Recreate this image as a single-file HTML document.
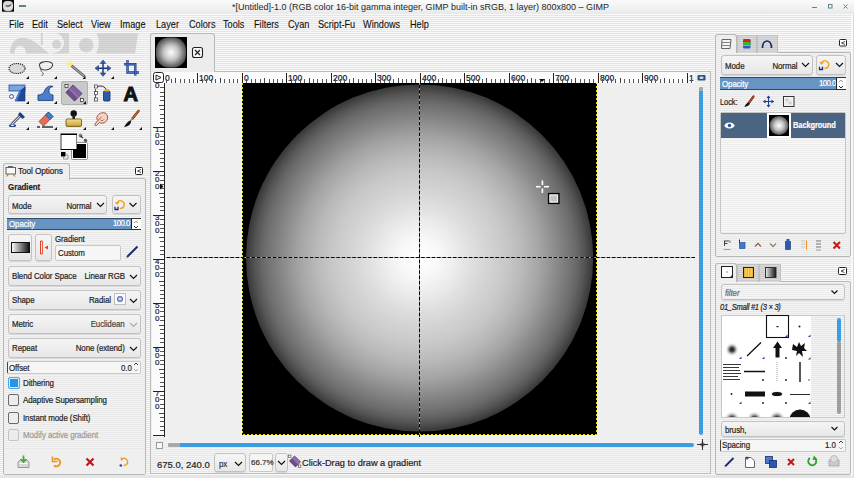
<!DOCTYPE html>
<html><head><meta charset="utf-8">
<style>
*{box-sizing:border-box;margin:0;padding:0}
html,body{width:854px;height:478px;overflow:hidden}
body{position:relative;font-family:"Liberation Sans",sans-serif;font-size:9px;color:#1e1e1e;
background:repeating-linear-gradient(to bottom,#f8f8f8 0 1px,#e5e5e5 1px 2px);}
.a{position:absolute}
.t{position:absolute;white-space:nowrap;line-height:1;font-size:9px;letter-spacing:-0.1px;-webkit-text-stroke:0.2px currentColor;transform:scaleX(.88);transform-origin:0 0}
.ns{transform:none;letter-spacing:0}
.menu span{position:absolute;top:20px;font-size:10.2px;line-height:1;color:#111;-webkit-text-stroke:0.1px #111;transform:scaleX(.9);transform-origin:0 0}
.panel{position:absolute;background:repeating-linear-gradient(to bottom,#f3f3f3 0 1px,#e8e8e8 1px 2px);border:1px solid #b8b8b8;border-radius:2px}
.tab{position:absolute;background:#eeeeee;border:1px solid #b8b8b8;border-bottom:none;border-radius:3px 3px 0 0}
.itab{position:absolute;background:repeating-linear-gradient(to bottom,#dadada 0 1px,#cbcbcb 1px 2px);border:1px solid #c0c0c0;border-bottom:none}
.combo{position:absolute;background:linear-gradient(#f5f5f5,#e7e7e7);border:1px solid #c2c2c2;border-radius:3px;box-shadow:0 1px 0 #d8d8d8}
.combo .l{position:absolute;left:3px;top:6px;font-size:9px;line-height:1;white-space:nowrap;letter-spacing:-0.1px;-webkit-text-stroke:0.2px currentColor;transform:scaleX(.88);transform-origin:0 0}
.combo .r{position:absolute;right:15px;top:6px;font-size:9px;line-height:1;white-space:nowrap;letter-spacing:-0.1px;-webkit-text-stroke:0.2px currentColor;transform:scaleX(.88);transform-origin:100% 0}
.spin{position:absolute;background:#6894c4;border-top:1px solid #2d4b6b;border-bottom:1px solid #2d4b6b}
.sbox{position:absolute;background:#fdfdfd;border-top:1px solid #333;border-bottom:1px solid #333;border-left:1px solid #222}
.entry{position:absolute;background:#f6f6f6;border:1px solid #c8c8c8;border-radius:2px}
.cb{position:absolute;width:11px;height:12px;border:1px solid #6a6a6a;border-radius:2px;background:#ececec}
.ruler{position:absolute;background:#fbfbfb}
svg{position:absolute;left:0;top:0}
</style></head><body>
<!-- title bar -->
<div class="a" style="left:0;top:0;width:854px;height:14px;background:linear-gradient(#fbfbfb,#e8e9ea)"></div>
<div class="t ns" style="left:232px;top:3px;font-size:9px;color:#262626;-webkit-text-stroke:0">*[Untitled]-1.0 (RGB color 16-bit gamma integer, GIMP built-in sRGB, 1 layer) 800x800 – GIMP</div>
<div class="a" style="left:851px;top:14px;width:3px;height:464px;background:#f8f8f8;border-right:1px solid #e0d8d8"></div>
<div class="a" style="left:0;top:476px;width:854px;height:2px;background:#e6e6e6"></div>
<!-- menu -->
<div class="menu">
<span style="left:9px">File</span><span style="left:32px">Edit</span><span style="left:57px">Select</span><span style="left:91px">View</span><span style="left:120px">Image</span><span style="left:156px">Layer</span><span style="left:189px">Colors</span><span style="left:223px">Tools</span><span style="left:254px">Filters</span><span style="left:288px">Cyan</span><span style="left:318px">Script-Fu</span><span style="left:363px">Windows</span><span style="left:410px">Help</span>
</div>

<!-- toolbox selected tool highlight -->
<div class="a" style="left:61px;top:81px;width:27px;height:24px;background:#c9c9c9;border:1px solid #b0b0b0;border-radius:2px"></div>

<!-- left dock: tool options -->
<div class="panel" style="left:3px;top:178px;width:143px;height:297px"></div>
<div class="tab" style="left:3px;top:163px;width:67px;height:17px"></div>
<div class="t" style="left:18px;top:166px;font-size:9.4px">Tool Options</div>
<div class="t" style="left:8px;top:183px;font-size:9.1px;font-weight:bold">Gradient</div>

<div class="combo" style="left:8px;top:195px;width:99px;height:19px"><span class="l">Mode</span><span class="r">Normal</span></div>
<div class="combo" style="left:112px;top:195px;width:29px;height:19px"></div>
<div class="spin" style="left:7px;top:218px;width:125px;height:12px"></div>
<div class="t" style="left:9px;top:220px;color:#fff">Opacity</div>
<div class="t" style="left:113px;top:219px;color:#fff;letter-spacing:-0.68px">100.0</div>
<div class="sbox" style="left:131px;top:218px;width:10px;height:12px"></div>

<div class="combo" style="left:8px;top:234px;width:24px;height:27px"></div>
<div class="combo" style="left:35px;top:234px;width:17px;height:27px"></div>
<div class="t" style="left:55px;top:235px">Gradient</div>
<div class="entry" style="left:55px;top:245px;width:66px;height:16px"></div>
<div class="t" style="left:58px;top:249px">Custom</div>

<div class="combo" style="left:8px;top:266px;width:133px;height:20px"><span class="l" style="top:5px">Blend Color Space</span><span class="r" style="top:5px">Linear RGB</span></div>
<div class="combo" style="left:8px;top:290px;width:133px;height:20px"><span class="l" style="top:5px">Shape</span><span class="r" style="right:29px;top:5px">Radial</span></div>
<div class="a" style="left:114px;top:293px;width:12px;height:12px;background:#fafafa;border:1px solid #c0c0c0"></div>
<div class="a" style="left:117px;top:296px;width:6px;height:6px;border-radius:3px;background:radial-gradient(#fff,#3a5ec0 70%)"></div>
<div class="combo" style="left:8px;top:314px;width:133px;height:20px"><span class="l" style="top:5px">Metric</span><span class="r" style="color:#444;top:5px">Euclidean</span></div>
<div class="combo" style="left:8px;top:338px;width:133px;height:20px"><span class="l" style="top:5px">Repeat</span><span class="r" style="top:5px">None (extend)</span></div>
<div class="entry" style="left:7px;top:361px;width:134px;height:13px;border-left:1px solid #444"></div>
<div class="t" style="left:9px;top:364px">Offset</div>
<div class="t" style="left:121px;top:364px">0.0</div>

<div class="cb" style="left:8px;top:377px;width:12px;background:#2a92e2;border-color:#48a8f0;box-shadow:inset 0 0 0 1px #d8ecfa"></div>
<div class="t" style="left:23px;top:379px">Dithering</div>
<div class="cb" style="left:8px;top:394px"></div>
<div class="t" style="left:23px;top:396px">Adaptive Supersampling</div>
<div class="cb" style="left:8px;top:412px"></div>
<div class="t" style="left:23px;top:414px">Instant mode  (Shift)</div>
<div class="cb" style="left:8px;top:429px;border-color:#c4c4c4"></div>
<div class="t" style="left:23px;top:431px;color:#9a9a9a">Modify active gradient</div>
<div class="a" style="left:4px;top:449px;width:141px;height:25px;background:#efefef"></div>

<!-- image window -->
<div class="a" style="left:150px;top:71px;width:561px;height:403px;border:1px solid #bcbcbc;background:repeating-linear-gradient(to bottom,#f4f4f4 0 1px,#e8e8e8 1px 2px)"></div>
<div class="tab" style="left:150px;top:33px;width:65px;height:39px;background:#ececec"></div>
<div class="a" style="left:155px;top:37px;width:32px;height:31px;background:#000"></div>
<div class="ruler" style="left:164px;top:72px;width:531px;height:11px"></div>
<div class="ruler" style="left:152px;top:83px;width:12px;height:354px"></div>
<div class="a" style="left:164px;top:83px;width:531px;height:359px;background:#efefef"></div>
<div class="a" style="left:242px;top:83px;width:355px;height:352px;background:#000"></div>
<div class="a" style="left:168px;top:443px;width:526px;height:4px;border-radius:2px;background:#3d9be0"></div>
<div class="a" style="left:168px;top:443px;width:12px;height:4px;border-radius:2px 0 0 2px;background:#a8a8a8"></div>
<div class="a" style="left:699px;top:87px;width:4px;height:348px;border-radius:2px;background:#3d9be0"></div>
<div class="a" style="left:699px;top:87px;width:4px;height:4px;border-radius:2px 2px 0 0;background:#a8a8a8"></div>
<div class="a" style="left:156px;top:442px;width:7px;height:7px;border:1px solid #9a9a9a;background:#f8f8f8"></div>
<!-- status bar -->
<div class="t ns" style="left:157px;top:460px;font-size:9.5px">675.0, 240.0</div>
<div class="combo" style="left:214px;top:453px;width:32px;height:19px"><span class="l" style="left:4px;color:#333">px</span></div>
<div class="entry" style="left:249px;top:453px;width:24px;height:19px;background:#f5f5f5"></div>
<div class="t ns" style="left:251px;top:459px;font-size:8px;color:#333">66.7%</div>
<div class="combo" style="left:275px;top:453px;width:13px;height:19px"></div>
<div class="t ns" style="left:302px;top:459px;font-size:9.2px">Click-Drag to draw a gradient</div>

<!-- right dock: layers -->
<div class="panel" style="left:715px;top:52px;width:136px;height:205px"></div>
<div class="tab" style="left:715px;top:34px;width:22px;height:19px"></div>
<div class="itab" style="left:737px;top:35px;width:20px;height:18px"></div>
<div class="itab" style="left:757px;top:35px;width:21px;height:18px"></div>
<div class="combo" style="left:721px;top:55px;width:92px;height:20px"><span class="l">Mode</span><span class="r">Normal</span></div>
<div class="combo" style="left:816px;top:55px;width:30px;height:20px"></div>
<div class="spin" style="left:720px;top:77px;width:117px;height:13px"></div>
<div class="t" style="left:722px;top:80px;color:#fff">Opacity</div>
<div class="t" style="left:819px;top:79px;color:#fff;letter-spacing:-0.68px">100.0</div>
<div class="sbox" style="left:836px;top:77px;width:10px;height:13px"></div>
<div class="t" style="left:720px;top:98px;font-size:8.5px">Lock:</div>
<div class="a" style="left:720px;top:112px;width:126px;height:122px;background:repeating-linear-gradient(to bottom,#f8f8f8 0 1px,#ececec 1px 2px);border:1px solid #c4c4c4;border-radius:2px"></div>
<div class="a" style="left:721px;top:113px;width:124px;height:25px;background:#4a6482"></div>
<div class="a" style="left:767px;top:113px;width:24px;height:25px;background:#fff"></div>
<div class="a" style="left:769px;top:115px;width:20px;height:21px;background:#000"></div>
<div class="t" style="left:793px;top:121px;font-size:8.5px;font-weight:bold;color:#fff">Background</div>

<!-- right dock: brushes -->
<div class="panel" style="left:715px;top:281px;width:136px;height:194px"></div>
<div class="tab" style="left:715px;top:263px;width:22px;height:19px"></div>
<div class="itab" style="left:737px;top:264px;width:22px;height:18px"></div>
<div class="itab" style="left:759px;top:264px;width:22px;height:18px"></div>
<div class="combo" style="left:721px;top:284px;width:124px;height:16px;background:repeating-linear-gradient(to bottom,#f6f6f6 0 1px,#ebebeb 1px 2px)"><span class="l" style="top:4px;font-style:italic;color:#666">filter</span></div>
<div class="t" style="left:720px;top:303px;font-style:italic;font-size:8.6px;letter-spacing:-0.34px">01_Small #1 (3 × 3)</div>
<div class="a" style="left:721px;top:315px;width:124px;height:103px;border:1px solid #c8c8c8;background:repeating-linear-gradient(to bottom,#f4f4f4 0 1px,#e6e6e6 1px 2px)"></div>
<div class="a" style="left:722px;top:316px;width:89px;height:101px;background:#fff"></div>
<div class="a" style="left:837px;top:318px;width:4px;height:24px;border-radius:2px;background:#3d9be0"></div>
<div class="a" style="left:837px;top:342px;width:4px;height:72px;border-radius:0 0 2px 2px;background:#9e9e9e"></div>
<div class="combo" style="left:721px;top:421px;width:124px;height:16px"><span class="l" style="top:4px">brush,</span></div>
<div class="entry" style="left:720px;top:439px;width:126px;height:13px;border-left:1px solid #444"></div>
<div class="t" style="left:722px;top:441px">Spacing</div>
<div class="t" style="left:825px;top:441px">1.0</div>
<div class="a" style="left:164px;top:72px;width:530px;height:11px;overflow:hidden"><div class="t ns" style="left:35px;top:2px;font-size:8.5px;color:#101838">100</div><div class="t ns" style="left:80px;top:2px;font-size:8.5px;color:#101838">0</div><div class="t ns" style="left:124px;top:2px;font-size:8.5px;color:#101838">100</div><div class="t ns" style="left:169px;top:2px;font-size:8.5px;color:#101838">200</div><div class="t ns" style="left:213px;top:2px;font-size:8.5px;color:#101838">300</div><div class="t ns" style="left:258px;top:2px;font-size:8.5px;color:#101838">400</div><div class="t ns" style="left:302px;top:2px;font-size:8.5px;color:#101838">500</div><div class="t ns" style="left:347px;top:2px;font-size:8.5px;color:#101838">600</div><div class="t ns" style="left:391px;top:2px;font-size:8.5px;color:#101838">700</div><div class="t ns" style="left:436px;top:2px;font-size:8.5px;color:#101838">800</div><div class="t ns" style="left:480px;top:2px;font-size:8.5px;color:#101838">900</div><div class="t ns" style="left:525px;top:2px;font-size:8.5px;color:#101838">1000</div><div class="t ns" style="left:1px;top:2px;font-size:8.5px;color:#101838">0</div></div><div class="t ns" style="left:155px;top:82px;font-size:8px;color:#101838">0</div><div class="t ns" style="left:155px;top:126px;font-size:8px;color:#101838">1</div><div class="t ns" style="left:155px;top:132px;font-size:8px;color:#101838">0</div><div class="t ns" style="left:155px;top:139px;font-size:8px;color:#101838">0</div><div class="t ns" style="left:155px;top:170px;font-size:8px;color:#101838">2</div><div class="t ns" style="left:155px;top:176px;font-size:8px;color:#101838">0</div><div class="t ns" style="left:155px;top:183px;font-size:8px;color:#101838">0</div><div class="t ns" style="left:155px;top:214px;font-size:8px;color:#101838">3</div><div class="t ns" style="left:155px;top:220px;font-size:8px;color:#101838">0</div><div class="t ns" style="left:155px;top:227px;font-size:8px;color:#101838">0</div><div class="t ns" style="left:155px;top:258px;font-size:8px;color:#101838">4</div><div class="t ns" style="left:155px;top:264px;font-size:8px;color:#101838">0</div><div class="t ns" style="left:155px;top:271px;font-size:8px;color:#101838">0</div><div class="t ns" style="left:155px;top:302px;font-size:8px;color:#101838">5</div><div class="t ns" style="left:155px;top:308px;font-size:8px;color:#101838">0</div><div class="t ns" style="left:155px;top:315px;font-size:8px;color:#101838">0</div><div class="t ns" style="left:155px;top:346px;font-size:8px;color:#101838">6</div><div class="t ns" style="left:155px;top:352px;font-size:8px;color:#101838">0</div><div class="t ns" style="left:155px;top:359px;font-size:8px;color:#101838">0</div><div class="t ns" style="left:155px;top:390px;font-size:8px;color:#101838">7</div><div class="t ns" style="left:155px;top:396px;font-size:8px;color:#101838">0</div><div class="t ns" style="left:155px;top:403px;font-size:8px;color:#101838">0</div><div class="a" style="left:152px;top:72px;width:12px;height:11px;background:#fbfbfb"></div><svg width="854" height="478" viewBox="0 0 854 478"><line x1="166.5" y1="79" x2="166.5" y2="83" stroke="#555" stroke-width="1"/><line x1="171.5" y1="79" x2="171.5" y2="83" stroke="#555" stroke-width="1"/><line x1="175.5" y1="78" x2="175.5" y2="83" stroke="#444" stroke-width="1"/><line x1="180.5" y1="79" x2="180.5" y2="83" stroke="#555" stroke-width="1"/><line x1="184.5" y1="79" x2="184.5" y2="83" stroke="#555" stroke-width="1"/><line x1="189.5" y1="79" x2="189.5" y2="83" stroke="#555" stroke-width="1"/><line x1="193.5" y1="79" x2="193.5" y2="83" stroke="#555" stroke-width="1"/><line x1="197.5" y1="73" x2="197.5" y2="83" stroke="#222" stroke-width="1"/><line x1="202.5" y1="79" x2="202.5" y2="83" stroke="#555" stroke-width="1"/><line x1="206.5" y1="79" x2="206.5" y2="83" stroke="#555" stroke-width="1"/><line x1="211.5" y1="79" x2="211.5" y2="83" stroke="#555" stroke-width="1"/><line x1="215.5" y1="79" x2="215.5" y2="83" stroke="#555" stroke-width="1"/><line x1="220.5" y1="78" x2="220.5" y2="83" stroke="#444" stroke-width="1"/><line x1="224.5" y1="79" x2="224.5" y2="83" stroke="#555" stroke-width="1"/><line x1="229.5" y1="79" x2="229.5" y2="83" stroke="#555" stroke-width="1"/><line x1="233.5" y1="79" x2="233.5" y2="83" stroke="#555" stroke-width="1"/><line x1="237.5" y1="79" x2="237.5" y2="83" stroke="#555" stroke-width="1"/><line x1="242.5" y1="73" x2="242.5" y2="83" stroke="#222" stroke-width="1"/><line x1="246.5" y1="79" x2="246.5" y2="83" stroke="#555" stroke-width="1"/><line x1="251.5" y1="79" x2="251.5" y2="83" stroke="#555" stroke-width="1"/><line x1="255.5" y1="79" x2="255.5" y2="83" stroke="#555" stroke-width="1"/><line x1="260.5" y1="79" x2="260.5" y2="83" stroke="#555" stroke-width="1"/><line x1="264.5" y1="78" x2="264.5" y2="83" stroke="#444" stroke-width="1"/><line x1="269.5" y1="79" x2="269.5" y2="83" stroke="#555" stroke-width="1"/><line x1="273.5" y1="79" x2="273.5" y2="83" stroke="#555" stroke-width="1"/><line x1="277.5" y1="79" x2="277.5" y2="83" stroke="#555" stroke-width="1"/><line x1="282.5" y1="79" x2="282.5" y2="83" stroke="#555" stroke-width="1"/><line x1="286.5" y1="73" x2="286.5" y2="83" stroke="#222" stroke-width="1"/><line x1="291.5" y1="79" x2="291.5" y2="83" stroke="#555" stroke-width="1"/><line x1="295.5" y1="79" x2="295.5" y2="83" stroke="#555" stroke-width="1"/><line x1="300.5" y1="79" x2="300.5" y2="83" stroke="#555" stroke-width="1"/><line x1="304.5" y1="79" x2="304.5" y2="83" stroke="#555" stroke-width="1"/><line x1="309.5" y1="78" x2="309.5" y2="83" stroke="#444" stroke-width="1"/><line x1="313.5" y1="79" x2="313.5" y2="83" stroke="#555" stroke-width="1"/><line x1="317.5" y1="79" x2="317.5" y2="83" stroke="#555" stroke-width="1"/><line x1="322.5" y1="79" x2="322.5" y2="83" stroke="#555" stroke-width="1"/><line x1="326.5" y1="79" x2="326.5" y2="83" stroke="#555" stroke-width="1"/><line x1="331.5" y1="73" x2="331.5" y2="83" stroke="#222" stroke-width="1"/><line x1="335.5" y1="79" x2="335.5" y2="83" stroke="#555" stroke-width="1"/><line x1="340.5" y1="79" x2="340.5" y2="83" stroke="#555" stroke-width="1"/><line x1="344.5" y1="79" x2="344.5" y2="83" stroke="#555" stroke-width="1"/><line x1="349.5" y1="79" x2="349.5" y2="83" stroke="#555" stroke-width="1"/><line x1="353.5" y1="78" x2="353.5" y2="83" stroke="#444" stroke-width="1"/><line x1="358.5" y1="79" x2="358.5" y2="83" stroke="#555" stroke-width="1"/><line x1="362.5" y1="79" x2="362.5" y2="83" stroke="#555" stroke-width="1"/><line x1="366.5" y1="79" x2="366.5" y2="83" stroke="#555" stroke-width="1"/><line x1="371.5" y1="79" x2="371.5" y2="83" stroke="#555" stroke-width="1"/><line x1="375.5" y1="73" x2="375.5" y2="83" stroke="#222" stroke-width="1"/><line x1="380.5" y1="79" x2="380.5" y2="83" stroke="#555" stroke-width="1"/><line x1="384.5" y1="79" x2="384.5" y2="83" stroke="#555" stroke-width="1"/><line x1="389.5" y1="79" x2="389.5" y2="83" stroke="#555" stroke-width="1"/><line x1="393.5" y1="79" x2="393.5" y2="83" stroke="#555" stroke-width="1"/><line x1="398.5" y1="78" x2="398.5" y2="83" stroke="#444" stroke-width="1"/><line x1="402.5" y1="79" x2="402.5" y2="83" stroke="#555" stroke-width="1"/><line x1="406.5" y1="79" x2="406.5" y2="83" stroke="#555" stroke-width="1"/><line x1="411.5" y1="79" x2="411.5" y2="83" stroke="#555" stroke-width="1"/><line x1="415.5" y1="79" x2="415.5" y2="83" stroke="#555" stroke-width="1"/><line x1="420.5" y1="73" x2="420.5" y2="83" stroke="#222" stroke-width="1"/><line x1="424.5" y1="79" x2="424.5" y2="83" stroke="#555" stroke-width="1"/><line x1="429.5" y1="79" x2="429.5" y2="83" stroke="#555" stroke-width="1"/><line x1="433.5" y1="79" x2="433.5" y2="83" stroke="#555" stroke-width="1"/><line x1="438.5" y1="79" x2="438.5" y2="83" stroke="#555" stroke-width="1"/><line x1="442.5" y1="78" x2="442.5" y2="83" stroke="#444" stroke-width="1"/><line x1="446.5" y1="79" x2="446.5" y2="83" stroke="#555" stroke-width="1"/><line x1="451.5" y1="79" x2="451.5" y2="83" stroke="#555" stroke-width="1"/><line x1="455.5" y1="79" x2="455.5" y2="83" stroke="#555" stroke-width="1"/><line x1="460.5" y1="79" x2="460.5" y2="83" stroke="#555" stroke-width="1"/><line x1="464.5" y1="73" x2="464.5" y2="83" stroke="#222" stroke-width="1"/><line x1="469.5" y1="79" x2="469.5" y2="83" stroke="#555" stroke-width="1"/><line x1="473.5" y1="79" x2="473.5" y2="83" stroke="#555" stroke-width="1"/><line x1="478.5" y1="79" x2="478.5" y2="83" stroke="#555" stroke-width="1"/><line x1="482.5" y1="79" x2="482.5" y2="83" stroke="#555" stroke-width="1"/><line x1="486.5" y1="78" x2="486.5" y2="83" stroke="#444" stroke-width="1"/><line x1="491.5" y1="79" x2="491.5" y2="83" stroke="#555" stroke-width="1"/><line x1="495.5" y1="79" x2="495.5" y2="83" stroke="#555" stroke-width="1"/><line x1="500.5" y1="79" x2="500.5" y2="83" stroke="#555" stroke-width="1"/><line x1="504.5" y1="79" x2="504.5" y2="83" stroke="#555" stroke-width="1"/><line x1="509.5" y1="73" x2="509.5" y2="83" stroke="#222" stroke-width="1"/><line x1="513.5" y1="79" x2="513.5" y2="83" stroke="#555" stroke-width="1"/><line x1="518.5" y1="79" x2="518.5" y2="83" stroke="#555" stroke-width="1"/><line x1="522.5" y1="79" x2="522.5" y2="83" stroke="#555" stroke-width="1"/><line x1="527.5" y1="79" x2="527.5" y2="83" stroke="#555" stroke-width="1"/><line x1="531.5" y1="78" x2="531.5" y2="83" stroke="#444" stroke-width="1"/><line x1="535.5" y1="79" x2="535.5" y2="83" stroke="#555" stroke-width="1"/><line x1="540.5" y1="79" x2="540.5" y2="83" stroke="#555" stroke-width="1"/><line x1="544.5" y1="79" x2="544.5" y2="83" stroke="#555" stroke-width="1"/><line x1="549.5" y1="79" x2="549.5" y2="83" stroke="#555" stroke-width="1"/><line x1="553.5" y1="73" x2="553.5" y2="83" stroke="#222" stroke-width="1"/><line x1="558.5" y1="79" x2="558.5" y2="83" stroke="#555" stroke-width="1"/><line x1="562.5" y1="79" x2="562.5" y2="83" stroke="#555" stroke-width="1"/><line x1="567.5" y1="79" x2="567.5" y2="83" stroke="#555" stroke-width="1"/><line x1="571.5" y1="79" x2="571.5" y2="83" stroke="#555" stroke-width="1"/><line x1="575.5" y1="78" x2="575.5" y2="83" stroke="#444" stroke-width="1"/><line x1="580.5" y1="79" x2="580.5" y2="83" stroke="#555" stroke-width="1"/><line x1="584.5" y1="79" x2="584.5" y2="83" stroke="#555" stroke-width="1"/><line x1="589.5" y1="79" x2="589.5" y2="83" stroke="#555" stroke-width="1"/><line x1="593.5" y1="79" x2="593.5" y2="83" stroke="#555" stroke-width="1"/><line x1="598.5" y1="73" x2="598.5" y2="83" stroke="#222" stroke-width="1"/><line x1="602.5" y1="79" x2="602.5" y2="83" stroke="#555" stroke-width="1"/><line x1="607.5" y1="79" x2="607.5" y2="83" stroke="#555" stroke-width="1"/><line x1="611.5" y1="79" x2="611.5" y2="83" stroke="#555" stroke-width="1"/><line x1="615.5" y1="79" x2="615.5" y2="83" stroke="#555" stroke-width="1"/><line x1="620.5" y1="78" x2="620.5" y2="83" stroke="#444" stroke-width="1"/><line x1="624.5" y1="79" x2="624.5" y2="83" stroke="#555" stroke-width="1"/><line x1="629.5" y1="79" x2="629.5" y2="83" stroke="#555" stroke-width="1"/><line x1="633.5" y1="79" x2="633.5" y2="83" stroke="#555" stroke-width="1"/><line x1="638.5" y1="79" x2="638.5" y2="83" stroke="#555" stroke-width="1"/><line x1="642.5" y1="73" x2="642.5" y2="83" stroke="#222" stroke-width="1"/><line x1="647.5" y1="79" x2="647.5" y2="83" stroke="#555" stroke-width="1"/><line x1="651.5" y1="79" x2="651.5" y2="83" stroke="#555" stroke-width="1"/><line x1="655.5" y1="79" x2="655.5" y2="83" stroke="#555" stroke-width="1"/><line x1="660.5" y1="79" x2="660.5" y2="83" stroke="#555" stroke-width="1"/><line x1="664.5" y1="78" x2="664.5" y2="83" stroke="#444" stroke-width="1"/><line x1="669.5" y1="79" x2="669.5" y2="83" stroke="#555" stroke-width="1"/><line x1="673.5" y1="79" x2="673.5" y2="83" stroke="#555" stroke-width="1"/><line x1="678.5" y1="79" x2="678.5" y2="83" stroke="#555" stroke-width="1"/><line x1="682.5" y1="79" x2="682.5" y2="83" stroke="#555" stroke-width="1"/><line x1="687.5" y1="73" x2="687.5" y2="83" stroke="#222" stroke-width="1"/><line x1="691.5" y1="79" x2="691.5" y2="83" stroke="#555" stroke-width="1"/><line x1="160" y1="87.5" x2="164" y2="87.5" stroke="#555" stroke-width="1"/><line x1="160" y1="92.5" x2="164" y2="92.5" stroke="#555" stroke-width="1"/><line x1="160" y1="96.5" x2="164" y2="96.5" stroke="#555" stroke-width="1"/><line x1="160" y1="100.5" x2="164" y2="100.5" stroke="#555" stroke-width="1"/><line x1="159" y1="105.5" x2="164" y2="105.5" stroke="#444" stroke-width="1"/><line x1="160" y1="109.5" x2="164" y2="109.5" stroke="#555" stroke-width="1"/><line x1="160" y1="114.5" x2="164" y2="114.5" stroke="#555" stroke-width="1"/><line x1="160" y1="118.5" x2="164" y2="118.5" stroke="#555" stroke-width="1"/><line x1="160" y1="122.5" x2="164" y2="122.5" stroke="#555" stroke-width="1"/><line x1="153" y1="127.5" x2="164" y2="127.5" stroke="#222" stroke-width="1"/><line x1="160" y1="131.5" x2="164" y2="131.5" stroke="#555" stroke-width="1"/><line x1="160" y1="136.5" x2="164" y2="136.5" stroke="#555" stroke-width="1"/><line x1="160" y1="140.5" x2="164" y2="140.5" stroke="#555" stroke-width="1"/><line x1="160" y1="144.5" x2="164" y2="144.5" stroke="#555" stroke-width="1"/><line x1="159" y1="149.5" x2="164" y2="149.5" stroke="#444" stroke-width="1"/><line x1="160" y1="153.5" x2="164" y2="153.5" stroke="#555" stroke-width="1"/><line x1="160" y1="158.5" x2="164" y2="158.5" stroke="#555" stroke-width="1"/><line x1="160" y1="162.5" x2="164" y2="162.5" stroke="#555" stroke-width="1"/><line x1="160" y1="166.5" x2="164" y2="166.5" stroke="#555" stroke-width="1"/><line x1="153" y1="171.5" x2="164" y2="171.5" stroke="#222" stroke-width="1"/><line x1="160" y1="175.5" x2="164" y2="175.5" stroke="#555" stroke-width="1"/><line x1="160" y1="180.5" x2="164" y2="180.5" stroke="#555" stroke-width="1"/><line x1="160" y1="184.5" x2="164" y2="184.5" stroke="#555" stroke-width="1"/><line x1="160" y1="188.5" x2="164" y2="188.5" stroke="#555" stroke-width="1"/><line x1="159" y1="193.5" x2="164" y2="193.5" stroke="#444" stroke-width="1"/><line x1="160" y1="197.5" x2="164" y2="197.5" stroke="#555" stroke-width="1"/><line x1="160" y1="202.5" x2="164" y2="202.5" stroke="#555" stroke-width="1"/><line x1="160" y1="206.5" x2="164" y2="206.5" stroke="#555" stroke-width="1"/><line x1="160" y1="210.5" x2="164" y2="210.5" stroke="#555" stroke-width="1"/><line x1="153" y1="215.5" x2="164" y2="215.5" stroke="#222" stroke-width="1"/><line x1="160" y1="219.5" x2="164" y2="219.5" stroke="#555" stroke-width="1"/><line x1="160" y1="224.5" x2="164" y2="224.5" stroke="#555" stroke-width="1"/><line x1="160" y1="228.5" x2="164" y2="228.5" stroke="#555" stroke-width="1"/><line x1="160" y1="232.5" x2="164" y2="232.5" stroke="#555" stroke-width="1"/><line x1="159" y1="237.5" x2="164" y2="237.5" stroke="#444" stroke-width="1"/><line x1="160" y1="241.5" x2="164" y2="241.5" stroke="#555" stroke-width="1"/><line x1="160" y1="246.5" x2="164" y2="246.5" stroke="#555" stroke-width="1"/><line x1="160" y1="250.5" x2="164" y2="250.5" stroke="#555" stroke-width="1"/><line x1="160" y1="254.5" x2="164" y2="254.5" stroke="#555" stroke-width="1"/><line x1="153" y1="259.5" x2="164" y2="259.5" stroke="#222" stroke-width="1"/><line x1="160" y1="263.5" x2="164" y2="263.5" stroke="#555" stroke-width="1"/><line x1="160" y1="268.5" x2="164" y2="268.5" stroke="#555" stroke-width="1"/><line x1="160" y1="272.5" x2="164" y2="272.5" stroke="#555" stroke-width="1"/><line x1="160" y1="276.5" x2="164" y2="276.5" stroke="#555" stroke-width="1"/><line x1="159" y1="281.5" x2="164" y2="281.5" stroke="#444" stroke-width="1"/><line x1="160" y1="285.5" x2="164" y2="285.5" stroke="#555" stroke-width="1"/><line x1="160" y1="290.5" x2="164" y2="290.5" stroke="#555" stroke-width="1"/><line x1="160" y1="294.5" x2="164" y2="294.5" stroke="#555" stroke-width="1"/><line x1="160" y1="298.5" x2="164" y2="298.5" stroke="#555" stroke-width="1"/><line x1="153" y1="303.5" x2="164" y2="303.5" stroke="#222" stroke-width="1"/><line x1="160" y1="307.5" x2="164" y2="307.5" stroke="#555" stroke-width="1"/><line x1="160" y1="311.5" x2="164" y2="311.5" stroke="#555" stroke-width="1"/><line x1="160" y1="316.5" x2="164" y2="316.5" stroke="#555" stroke-width="1"/><line x1="160" y1="320.5" x2="164" y2="320.5" stroke="#555" stroke-width="1"/><line x1="159" y1="325.5" x2="164" y2="325.5" stroke="#444" stroke-width="1"/><line x1="160" y1="329.5" x2="164" y2="329.5" stroke="#555" stroke-width="1"/><line x1="160" y1="333.5" x2="164" y2="333.5" stroke="#555" stroke-width="1"/><line x1="160" y1="338.5" x2="164" y2="338.5" stroke="#555" stroke-width="1"/><line x1="160" y1="342.5" x2="164" y2="342.5" stroke="#555" stroke-width="1"/><line x1="153" y1="347.5" x2="164" y2="347.5" stroke="#222" stroke-width="1"/><line x1="160" y1="351.5" x2="164" y2="351.5" stroke="#555" stroke-width="1"/><line x1="160" y1="355.5" x2="164" y2="355.5" stroke="#555" stroke-width="1"/><line x1="160" y1="360.5" x2="164" y2="360.5" stroke="#555" stroke-width="1"/><line x1="160" y1="364.5" x2="164" y2="364.5" stroke="#555" stroke-width="1"/><line x1="159" y1="369.5" x2="164" y2="369.5" stroke="#444" stroke-width="1"/><line x1="160" y1="373.5" x2="164" y2="373.5" stroke="#555" stroke-width="1"/><line x1="160" y1="377.5" x2="164" y2="377.5" stroke="#555" stroke-width="1"/><line x1="160" y1="382.5" x2="164" y2="382.5" stroke="#555" stroke-width="1"/><line x1="160" y1="386.5" x2="164" y2="386.5" stroke="#555" stroke-width="1"/><line x1="153" y1="391.5" x2="164" y2="391.5" stroke="#222" stroke-width="1"/><line x1="160" y1="395.5" x2="164" y2="395.5" stroke="#555" stroke-width="1"/><line x1="160" y1="399.5" x2="164" y2="399.5" stroke="#555" stroke-width="1"/><line x1="160" y1="404.5" x2="164" y2="404.5" stroke="#555" stroke-width="1"/><line x1="160" y1="408.5" x2="164" y2="408.5" stroke="#555" stroke-width="1"/><line x1="159" y1="413.5" x2="164" y2="413.5" stroke="#444" stroke-width="1"/><line x1="160" y1="417.5" x2="164" y2="417.5" stroke="#555" stroke-width="1"/><line x1="160" y1="421.5" x2="164" y2="421.5" stroke="#555" stroke-width="1"/><line x1="160" y1="426.5" x2="164" y2="426.5" stroke="#555" stroke-width="1"/><line x1="160" y1="430.5" x2="164" y2="430.5" stroke="#555" stroke-width="1"/><line x1="153" y1="435.5" x2="164" y2="435.5" stroke="#222" stroke-width="1"/><line x1="164.5" y1="83" x2="164.5" y2="437" stroke="#222"/><defs>
<radialGradient id="sph" gradientUnits="userSpaceOnUse" cx="419.6" cy="258" r="173.6"><stop offset="0" stop-color="#ffffff"/><stop offset="0.1" stop-color="#f9f9f9"/><stop offset="0.2" stop-color="#ededed"/><stop offset="0.3" stop-color="#dfdfdf"/><stop offset="0.4" stop-color="#d3d3d3"/><stop offset="0.5" stop-color="#c8c8c8"/><stop offset="0.6" stop-color="#b8b8b8"/><stop offset="0.7" stop-color="#a3a3a3"/><stop offset="0.75" stop-color="#959595"/><stop offset="0.8" stop-color="#878787"/><stop offset="0.85" stop-color="#797979"/><stop offset="0.9" stop-color="#6a6a6a"/><stop offset="0.95" stop-color="#545454"/><stop offset="0.97" stop-color="#484848"/><stop offset="1" stop-color="#373737"/></radialGradient>
<radialGradient id="sphs" cx="0.5" cy="0.5" r="0.5">
<stop offset="0" stop-color="#fff"/><stop offset="0.5" stop-color="#c3c3c3"/><stop offset="1" stop-color="#555"/>
</radialGradient>
<linearGradient id="gprev" x1="0" y1="0" x2="1" y2="0"><stop offset="0" stop-color="#fff"/><stop offset="1" stop-color="#111"/></linearGradient>
<linearGradient id="gold" x1="0" y1="0" x2="0" y2="1"><stop offset="0" stop-color="#f8e08a"/><stop offset="1" stop-color="#c8a030"/></linearGradient>
</defs>
<!-- sphere -->
<circle cx="419.6" cy="258" r="173.6" fill="url(#sph)"/>
<!-- image border dashed yellow -->
<path d="M242.5 83 V434.5 H596.5 V83" fill="none" stroke="#e8e000" stroke-width="1" stroke-dasharray="2 2"/>
<!-- guides -->
<line x1="165" y1="257.5" x2="695" y2="257.5" stroke="#000" stroke-width="1"/>
<line x1="165" y1="257.5" x2="695" y2="257.5" stroke="#50d8f8" stroke-width="1" stroke-dasharray="1.8 3.5"/>
<line x1="419.5" y1="83" x2="419.5" y2="437" stroke="#000" stroke-width="1"/>
<line x1="419.5" y1="83" x2="419.5" y2="437" stroke="#50d8f8" stroke-width="1" stroke-dasharray="1.8 3.5"/>
<!-- ruler pointers -->
<path d="M539 79 H545 L542 82 Z" fill="#111"/>
<path d="M160 183.5 V189.5 L163.5 186.5 Z" fill="#111"/>
<!-- cursor -->
<g stroke="#fff" stroke-width="1.6" fill="none">
<line x1="536" y1="186.7" x2="540.5" y2="186.7"/><line x1="544" y1="186.7" x2="549" y2="186.7"/>
<line x1="542.4" y1="180.5" x2="542.4" y2="185"/><line x1="542.4" y1="188.5" x2="542.4" y2="193"/>
</g>
<rect x="548.5" y="193.5" width="10.5" height="10" fill="#999" stroke="#000" stroke-width="1.2"/>
<rect x="550" y="195" width="7.5" height="7" fill="#c4c4c4" stroke="#fff" stroke-width="0.8"/>
<!-- image tab thumbnail -->
<rect x="155" y="37" width="32" height="31" fill="#000"/>
<rect x="156" y="37.5" width="30" height="30" rx="12.5" fill="url(#sphs)"/>
<!-- tab close -->
<rect x="192.5" y="47.5" width="10" height="10" rx="2" fill="#fafafa" stroke="#222" stroke-width="1.1"/>
<path d="M195 50 L200 55 M200 50 L195 55" stroke="#222" stroke-width="1.2"/>
<!-- ruler menu button -->
<rect x="153.5" y="72.5" width="10" height="10" rx="2" fill="#fff" stroke="#222"/>
<path d="M156 75 L161 77.5 L156 80 Z" fill="none" stroke="#222" stroke-width="1"/>
<!-- nav button -->
<rect x="697.5" y="75" width="8" height="5.5" rx="1" fill="#2c4d8a"/>
<rect x="699.5" y="76.5" width="4" height="2.5" rx="1" fill="#cfd8e8"/>
<!-- nav crosshair bottom right -->
<path d="M697 444.5 H708 M702.5 439 V450" stroke="#333" stroke-width="1"/>
<circle cx="702.5" cy="444.5" r="1.8" fill="none" stroke="#333" stroke-width="0.8"/>
<!-- toolbox markers -->
<g fill="#111">
<path d="M29 76 V79 H26 Z"/><path d="M57 76 V79 H54 Z"/><path d="M85.5 76 V79 H82.5 Z"/><path d="M114 76 V79 H111 Z"/>
<path d="M29 101 V104 H26 Z"/><path d="M57 101 V104 H54 Z"/><path d="M86 101 V104 H83 Z"/>
<path d="M29 127 V130 H26 Z"/><path d="M57 127 V130 H54 Z"/><path d="M86 127 V130 H83 Z"/><path d="M114 127 V130 H111 Z"/><path d="M142 127 V130 H139 Z"/>
</g>
<!-- wilber watermark -->
<g fill="#b8b8b8" opacity="0.5">
<path d="M10 53.5 C10 44 15 37.7 22 37.7 C30 37.7 36 42 49 53.5 H26 C26 49 23.5 46 20 46 C16.5 46 14.5 49 14.5 53.5 Z"/>
<rect x="40.8" y="33" width="2" height="12"/>
<circle cx="56.6" cy="44.2" r="4.5"/>
<path d="M56 33 H69 V53.5 H52 V52.5 A8.3 8.3 0 0 0 56 33 Z"/>
<circle cx="86.3" cy="45.2" r="7.3"/>
<path d="M96.6 33.3 H138 L135 53.5 H96 Q101.5 43.4 96.6 33.3 Z"/>
</g>
<!-- ellipse select -->
<ellipse cx="17" cy="68.5" rx="8" ry="5" fill="#d9d9d6" stroke="#222" stroke-width="1.2" stroke-dasharray="1.2 0.9"/>
<!-- lasso -->
<path d="M40 67 C37 62 46 60.5 51 62.5 C55 64.5 51 70 45 70 C42 70 40 69 40 67 Z" fill="none" stroke="#444" stroke-width="1.1"/>
<path d="M41.5 69 C40 71 42 72 43 73 C44 74 42.5 75.5 41.5 75.5" fill="none" stroke="#555" stroke-width="1"/>
<!-- fuzzy -->
<circle cx="70" cy="64" r="3.5" fill="#fff0a0" opacity="0.7"/>
<path d="M70 60.5 V67.5 M66.5 64 H73.5" stroke="#f8e070" stroke-width="0.8" opacity="0.8"/>
<path d="M72.5 66.5 L84 76" stroke="#444" stroke-width="2.6" stroke-linecap="round"/>
<path d="M72.5 66.5 L84 76" stroke="#b0b0b0" stroke-width="1.1" stroke-linecap="round"/>
<!-- move -->
<path d="M103 62.5 V74 M97.5 68.2 H108.5" stroke="#1a3a80" stroke-width="1.5"/>
<g fill="#2f5da8" stroke="#15306a" stroke-width="0.5">
<path d="M103 60 L105.8 63.5 H100.2 Z"/><path d="M103 76.4 L105.8 72.9 H100.2 Z"/>
<path d="M95 68.2 L98.5 65.4 V71 Z"/><path d="M111 68.2 L107.5 65.4 V71 Z"/>
</g>
<!-- crop -->
<path d="M127.5 60 V72.5 H139" fill="none" stroke="#1f3f80" stroke-width="2.4"/>
<path d="M127.5 60 V72.5 H139" fill="none" stroke="#4a78c8" stroke-width="1"/>
<path d="M124 64.2 H135.3 V75.4" fill="none" stroke="#1f3f80" stroke-width="2.4"/>
<path d="M124 64.2 H135.3 V75.4" fill="none" stroke="#4a78c8" stroke-width="1"/>
<!-- unified transform -->
<rect x="9" y="85" width="16" height="6" fill="#79a6e0" stroke="#2a4f90" stroke-width="0.8"/>
<path d="M20 91 L25 87 V101 H15 Z" fill="#1f4a9a" stroke="#15306a" stroke-width="0.6"/>
<path d="M19 91 L15 101 H17 L21 91Z" fill="#4a7ad0"/>
<circle cx="11.5" cy="96.5" r="2" fill="none" stroke="#2a4f90" stroke-width="0.9"/>
<!-- warp -->
<path d="M38 100.4 V95 C42 95 44 93 45 90 C46.5 86.5 50 85.4 53 86.5 C50 87 48.5 89 49 92 C49.5 94 51 95 53 95 V100.4 Z" fill="#4a7fcc" stroke="#1f3f80" stroke-width="0.9"/>
<!-- gradient tool -->
<path d="M73 85 L82 93.5 L74.5 101 L66 92.5 Z" fill="#6e4f8a" stroke="#3a2550" stroke-width="0.8"/>
<path d="M69.5 88.8 L78.2 97.3" stroke="#a58ac0" stroke-width="1.2"/>
<path d="M73 85 L82 93.5 L78.3 97.2 L69.5 88.8 Z" fill="#8a6aa8" opacity="0.7"/>
<rect x="65" y="84.5" width="3" height="3" fill="#fff" stroke="#222" stroke-width="0.7"/>
<rect x="80.5" y="98.5" width="3" height="3" fill="#fff" stroke="#222" stroke-width="0.7"/>
<!-- paths -->
<path d="M96 87 C99 86 103 84.5 106.5 89.5" fill="none" stroke="#222" stroke-width="1"/>
<rect x="94.5" y="85" width="3" height="3" fill="#fff" stroke="#333" stroke-width="0.7"/>
<rect x="94.5" y="91.5" width="3" height="3" fill="#fff" stroke="#333" stroke-width="0.7"/>
<rect x="94.5" y="98" width="3" height="3" fill="#fff" stroke="#333" stroke-width="0.7"/>
<path d="M95.5 89 V91.5 M95.5 95 V98" stroke="#333" stroke-width="0.8"/>
<rect x="103.5" y="91" width="6.5" height="10" rx="1" fill="#2a5ab0" stroke="#14306a" stroke-width="0.8"/>
<rect x="104.5" y="89" width="4.5" height="2.5" fill="#e8b020"/>
<!-- text A -->
<text x="130.8" y="101" font-family="Liberation Sans" font-weight="bold" font-size="20" text-anchor="middle" fill="#111" stroke="#111" stroke-width="1">A</text>
<!-- color picker -->
<path d="M12 124 L21 115" stroke="#222" stroke-width="2.6" stroke-linecap="round"/>
<path d="M12 124 L21 115" stroke="#c8d4e4" stroke-width="1.3" stroke-linecap="round"/>
<path d="M20 112 L25 117 L22.5 119 L18 114.5 Z" fill="#1f3f80"/>
<ellipse cx="12.5" cy="125.5" rx="3.6" ry="1.6" fill="#1f3f80"/>
<ellipse cx="12.5" cy="125.3" rx="1.8" ry="0.7" fill="#fff"/>
<!-- eraser -->
<path d="M39 121.5 L48.5 112 L53 116.5 L43.5 126 Z" fill="#e86a5a" stroke="#7a2a20" stroke-width="0.7"/>
<path d="M45.5 115 L48.5 112 L53 116.5 L50 119.5 Z" fill="#3a80d0" stroke="#1f3f80" stroke-width="0.6"/>
<path d="M37 127 H40 M42 127 H53" stroke="#333" stroke-width="1.4"/>
<!-- clone -->
<circle cx="73.7" cy="113.5" r="3.2" fill="#111"/>
<rect x="72.4" y="115" width="2.6" height="4.5" fill="#222"/>
<rect x="66" y="119" width="15.5" height="7.4" rx="1" fill="url(#gold)" stroke="#5a4a10" stroke-width="0.8"/>
<!-- smudge -->
<path d="M97 117 C98 113.5 102 112 105 113 C108 114.5 108.5 119 106 121.5 C104 123.5 101 123.5 99.5 122.5 L96.5 125.5 C95 126 94.5 125 95 124 L97.8 120.5 C96.8 119.5 96.6 118.2 97 117 Z" fill="#f2d2c4" stroke="#9a4a2a" stroke-width="0.9"/>
<path d="M97.8 120.5 L101.5 117 M100.5 120 C101.5 121 103 120.8 103.8 119.5" fill="none" stroke="#9a4a2a" stroke-width="0.8"/>
<!-- paintbrush -->
<path d="M138.5 111 L132.5 118.5" stroke="#6a2a08" stroke-width="2.4" stroke-linecap="round"/>
<path d="M138.5 111 L132.5 118.5" stroke="#e07020" stroke-width="1.2" stroke-linecap="round"/>
<path d="M132.5 118.5 L130 121.5" stroke="#8a9aaa" stroke-width="1.6"/>
<path d="M130.5 120.5 C128 121 126 124 124 127 C127.5 126.5 130.5 125 131 122 Z" fill="#111"/>
<!-- fg/bg -->
<rect x="71.5" y="142.5" width="16" height="17" rx="1" fill="#fff" stroke="#777" stroke-width="0.8"/>
<rect x="73" y="144" width="13" height="14" fill="#000"/>
<rect x="60.5" y="133.5" width="16.5" height="16.5" fill="#000"/>
<rect x="61.5" y="135" width="15" height="14" fill="#fff"/>
<rect x="60.5" y="135" width="1" height="14" fill="#bbb"/>
<rect x="61" y="152" width="4.5" height="4.5" fill="#000"/>
<path d="M65.5 155 H68 V159 H63.5 V156.5" fill="none" stroke="#777" stroke-width="0.7"/>
<path d="M80 135.5 L83 138 M84.5 139.5 L86.5 141.5" stroke="#333" stroke-width="1.1"/>
<circle cx="80.5" cy="135.5" r="1.3" fill="none" stroke="#333" stroke-width="0.8"/>
<circle cx="85.5" cy="140.5" r="1.3" fill="none" stroke="#333" stroke-width="0.8"/>
<!-- tool options tab icon -->
<rect x="6" y="167.5" width="9.5" height="6.5" fill="#f8f8f8" stroke="#555" stroke-width="0.9"/>
<path d="M6.5 176.5 L8.5 174 M15 176.5 L13 174" stroke="#b07a30" stroke-width="1.2"/>
<path d="M8 166.5 H13" stroke="#555" stroke-width="0.9"/>
<!-- dock menu btn left -->
<rect x="135.5" y="167.5" width="7" height="7" rx="1" fill="#fff" stroke="#222" stroke-width="1"/>
<path d="M141 169.5 L137.5 171 L141 172.5" fill="none" stroke="#222" stroke-width="0.8"/>
<g fill="none" stroke="#111" stroke-width="1.15">
<!-- combo chevrons tool options -->
<path d="M97 203 L100.5 206.5 L104 203"/>
<path d="M129.5 203 L133 206.5 L136.5 203"/>
<path d="M130 275 L133.5 278.5 L137 275"/>
<path d="M130 299 L133.5 302.5 L137 299"/>
<path d="M130 323 L133.5 326.5 L137 323" stroke="#aaa"/>
<path d="M130 347 L133.5 350.5 L137 347"/>
<!-- spinner arrows -->
<path d="M134 223 L136 221 L138 223" stroke="#888" stroke-width="0.8"/>
<path d="M134 226 L136 228 L138 226" stroke-width="0.9"/>
<path d="M134 365 L136 363 L138 365" stroke-width="0.8"/>
<path d="M134 369 L136 371 L138 369" stroke="#999" stroke-width="0.8"/>
<!-- right dock chevrons -->
<path d="M802 63 L805.5 66.5 L809 63"/>
<path d="M836 63 L839.5 66.5 L843 63"/>
<path d="M839 82 L841 80 L843 82" stroke="#888" stroke-width="0.8"/>
<path d="M839 86 L841 88 L843 86" stroke-width="0.9"/>
<path d="M831.5 290.5 L834.5 293.5 L837.5 290.5"/>
<path d="M831.5 427 L834.5 430 L837.5 427"/>
<path d="M839 443 L841 441 L843 443" stroke-width="0.8"/>
<path d="M839 447 L841 449 L843 447" stroke="#999" stroke-width="0.8"/>
<!-- status bar chevrons -->
<path d="M235 462 L238.5 465.5 L242 462"/>
<path d="M278 461 L281.5 464.5 L285 461"/>
</g>
<!-- reset icons (orange arrow + blue dot) -->
<g id="rst">
<path d="M117.2 202.5 A3.8 3.8 0 1 1 120 208.3" fill="none" stroke="#f4a020" stroke-width="1.4"/>
<path d="M114.8 202 H119.5 L117.2 205 Z" fill="#f4a020"/>
<path d="M115 206.8 V209.5 H118 V206.8" fill="none" stroke="#1a2a7a" stroke-width="1.3"/>
</g>
<use href="#rst" x="704.5" y="-140"/>
<!-- gradient preview button -->
<rect x="11.5" y="242.5" width="18" height="10" fill="url(#gprev)" stroke="#111" stroke-width="1"/>
<!-- reverse button -->
<path d="M40.5 241 V254 M40.5 241 H42.5 M40.5 254 H42.5" fill="none" stroke="#e04020" stroke-width="1"/>
<path d="M42.5 241 V254" stroke="#e04020" stroke-width="0.8"/>
<path d="M48 245.5 L44.5 247.5 L48 249.5 Z" fill="#e04020"/>
<!-- pencil -->
<path d="M137.5 246.5 L127 257" stroke="#1a2a6a" stroke-width="2"/>
<path d="M127 257 L125.5 259 L128 257.5 Z" fill="#d0a040"/>
<!-- bottom buttons tool options -->
<path d="M18 462 L20 460 H27 L29 462 V467.5 H18 Z" fill="#d8d8d8" stroke="#888" stroke-width="0.8"/>
<path d="M19.5 463.5 H27.5" stroke="#fff" stroke-width="1"/>
<path d="M23.5 455.5 V461.5 M20.8 459 L23.5 462 L26.2 459" fill="none" stroke="#40b020" stroke-width="1.7"/>
<path d="M54 459.5 A3.8 3.8 0 1 1 54 465.5" fill="none" stroke="#f09020" stroke-width="1.7"/>
<path d="M52.5 456.5 V461.5 H57.5" fill="none" stroke="#f09020" stroke-width="1.6"/>
<path d="M86.5 458.5 L93.5 465.5 M93.5 458.5 L86.5 465.5" stroke="#c01818" stroke-width="2.2"/>
<path d="M123 458.5 A3.6 3.6 0 1 1 123.5 465.5" fill="none" stroke="#f0a020" stroke-width="1.4"/>
<path d="M120.5 457 L124 458.8 L121 461 Z" fill="#f0a020"/>
<circle cx="120.8" cy="465.5" r="1.3" fill="#2a4a9a"/>
<!-- status bar gradient icon -->
<path d="M294.5 456 L300.5 461.8 L295.5 467 L289.5 461 Z" fill="#6e4f8a" stroke="#3a2550" stroke-width="0.7"/>
<path d="M294.5 456 L300.5 461.8 L298 464.4 L292 458.5 Z" fill="#8e70aa"/>
<rect x="288.5" y="455" width="2.4" height="2.4" fill="#fff" stroke="#222" stroke-width="0.5"/>
<rect x="298.5" y="465" width="2.4" height="2.4" fill="#fff" stroke="#222" stroke-width="0.5"/>
<!-- window controls -->
<path d="M812 7.5 H817" stroke="#5a8890" stroke-width="1"/>
<rect x="828.5" y="4.5" width="3.5" height="3.5" fill="none" stroke="#5a8890" stroke-width="1"/>
<path d="M843.5 4.5 L847.5 8.5 M847.5 4.5 L843.5 8.5" stroke="#5a8890" stroke-width="1"/>
<!-- app icon -->
<rect x="2" y="0" width="12" height="11.7" fill="#0c0c0c"/>
<rect x="3" y="1" width="10" height="10" rx="4" fill="#d8d8d8"/>
<path d="M5.5 5 C7 6 9 6 11.5 3.5 C11 6.5 9 7 6 6.5 Z" fill="#333"/>
<path d="M4 7.5 C6 9 9 9 12 7" fill="none" stroke="#eee" stroke-width="0.8"/>
<rect x="19" y="5" width="7" height="2" fill="#6a8088"/>
<!-- right dock tabs -->
<path d="M722 39.5 H731 L730 48.5 H721.5 Z" fill="#f4f4f4" stroke="#555" stroke-width="0.9"/>
<path d="M722 42.5 H730.5 M722 45.5 H730.5" stroke="#666" stroke-width="0.8"/>
<rect x="743" y="39" width="7.5" height="9.5" rx="1.5" fill="#2a58d0"/>
<rect x="743" y="39" width="7.5" height="3.5" rx="1.5" fill="#d82020"/>
<rect x="743" y="42" width="7.5" height="3.2" fill="#40b030"/>
<rect x="743" y="45.2" width="7.5" height="0.8" fill="#e0c020"/>
<path d="M762.5 48 C762.5 43 765 41 767 41 C769 41 771.5 43 771.5 48" fill="none" stroke="#1a2a70" stroke-width="1.7"/>
<rect x="839.5" y="39.5" width="7" height="6.5" rx="1" fill="#fff" stroke="#222" stroke-width="1"/>
<path d="M845 41.5 L841.5 43 L845 44.5" fill="none" stroke="#222" stroke-width="0.8"/>
<!-- lock icons -->
<path d="M753.5 96.5 L748 104" stroke="#7a2010" stroke-width="2.2" stroke-linecap="round"/>
<path d="M753.5 96.5 L748 104" stroke="#d05a30" stroke-width="1" stroke-linecap="round"/>
<path d="M748.5 102.5 C746.5 103 745 105 744.5 107 C747 106.5 749 105.5 749.8 103.8 Z" fill="#111"/>
<path d="M768.5 96 V107 M763.5 101.5 H773.5" stroke="#1f3f90" stroke-width="1.1"/>
<path d="M768.5 95.5 L766.5 98 H770.5Z M768.5 107.5 L766.5 105 H770.5Z M763 101.5 L765.5 99.5 V103.5Z M774 101.5 L771.5 99.5 V103.5Z" fill="#1f3f90"/>
<rect x="783.5" y="96.5" width="10.5" height="10" fill="#f4f4f4" stroke="#333" stroke-width="1"/>
<rect x="785.5" y="98.5" width="3" height="3" fill="#ccc"/><rect x="788.5" y="101.5" width="3" height="3" fill="#ccc"/>
<rect x="788.5" y="98.5" width="3" height="3" fill="#e8e8e8"/><rect x="785.5" y="101.5" width="3" height="3" fill="#e8e8e8"/>
<!-- layer row -->
<ellipse cx="729.5" cy="125.5" rx="5" ry="3" fill="#fff"/>
<circle cx="729.5" cy="125.5" r="1.7" fill="#2a4a9a"/>
<circle cx="779" cy="125.5" r="9.5" fill="url(#sphs)"/>
<!-- layer buttons -->
<path d="M724 241 H729 M724.5 241 V246 M724.5 243.5 H727.5" stroke="#333" stroke-width="0.9"/>
<path d="M730 240.5 V243" stroke="#333" stroke-width="0.7"/>
<path d="M723.5 249.5 H730.5" stroke="#888" stroke-width="0.8"/>
<rect x="739.5" y="242.5" width="5.5" height="6" fill="#3a7ad0" stroke="#1f3f80" stroke-width="0.6"/>
<path d="M739.5 239.5 V242.5" stroke="#333" stroke-width="1"/>
<path d="M755 246.5 L758 243.5 L761 246.5" fill="none" stroke="#a06040" stroke-width="1.3"/>
<path d="M770 243.5 L773 246.5 L776 243.5" fill="none" stroke="#a08060" stroke-width="1.3"/>
<rect x="785.5" y="241.5" width="5" height="8" fill="#2a5ab0" stroke="#1a2f6a" stroke-width="0.6"/>
<rect x="786.5" y="239" width="3" height="2" fill="#2a5ab0"/>
<path d="M801 241 H805 M801 244 H805 M801 247 H805" stroke="#bbb" stroke-width="0.8"/>
<path d="M806.5 240.5 V249.5" stroke="#f09020" stroke-width="1.1"/>
<path d="M816 241 H821 M816 244 H821 M816 247 H821" stroke="#555" stroke-width="0.8"/>
<path d="M816 250 H821" stroke="#888" stroke-width="0.8"/>
<path d="M833.5 242 L840 248.5 M840 242 L833.5 248.5" stroke="#c01818" stroke-width="2"/>
<!-- brush dock tabs -->
<rect x="721.5" y="266.5" width="11" height="11" fill="#fff" stroke="#222" stroke-width="1"/>
<rect x="726.5" y="271.5" width="1" height="1" fill="#222"/>
<path d="M732 277 L732 275 L730 277 Z" fill="#2a4aa0"/>
<rect x="743.5" y="267.5" width="10" height="10" fill="#f0b030" stroke="#222" stroke-width="1"/>
<path d="M746 268 V277 M748.5 268 V277 M751 268 V277" stroke="#f8e070" stroke-width="0.9"/>
<defs><linearGradient id="g3" x1="0" x2="1"><stop offset="0" stop-color="#eee"/><stop offset="1" stop-color="#111"/></linearGradient></defs>
<rect x="765.5" y="267.5" width="10.5" height="10" fill="url(#g3)" stroke="#333" stroke-width="1"/>
<rect x="838.5" y="267.5" width="8" height="7" rx="1" fill="#fff" stroke="#222" stroke-width="1"/>
<path d="M844.5 269.5 L841 271 L844.5 272.5" fill="none" stroke="#222" stroke-width="0.8"/>
<!-- brush grid -->
<defs><radialGradient id="fz"><stop offset="0" stop-color="#111"/><stop offset="0.35" stop-color="#555"/><stop offset="1" stop-color="#fff" stop-opacity="0"/></radialGradient>
<clipPath id="bgc"><rect x="722" y="314.5" width="89" height="102.5"/></clipPath></defs>
<g clip-path="url(#bgc)">
<rect x="766.5" y="315.5" width="22" height="22" fill="#fff" stroke="#111" stroke-width="1.1"/>
<rect x="776.5" y="326" width="2" height="1.2" fill="#111"/>
<circle cx="799.5" cy="326.5" r="1" fill="#222"/>
<circle cx="732" cy="349.5" r="7" fill="url(#fz)"/>
<path d="M747 356 L761 342.5" stroke="#111" stroke-width="1.3"/>
<path d="M777.5 341.5 L782 348 H779.5 V357.5 H775.5 V348 H773 Z" fill="#111"/>
<path d="M793 344 L797 347 L799 342 L801 346 L805 343 L804 348 L807 351 L802 351 L803 357 L799 353 L796 356 L797 351 L792 350 Z" fill="#111"/>
<g fill="#2a3ab0"><path d="M741.5 356.5 V359 H739 Z"/><path d="M764.5 356.5 V359 H762 Z"/><path d="M787.5 334.5 V337 H785 Z"/><path d="M810.5 334.5 V337 H808 Z"/><path d="M741.5 401.5 V404 H739 Z"/><path d="M810.5 401.5 V404 H808 Z"/></g>
<path d="M810.5 357 V359.5 H808 Z" fill="#a02020"/>
<circle cx="786" cy="358" r="0.9" fill="#111"/>
<path d="M723 364.5 H741 M723 367.5 H739 M723 370.5 H740 M723 373.5 H741 M723 376.5 H738 M723 379.5 H740" stroke="#222" stroke-width="0.9"/>
<path d="M744 371.5 H765" stroke="#111" stroke-width="1.6"/>
<path d="M777 362 V382" stroke="#888" stroke-width="0.8" stroke-dasharray="1 1"/>
<path d="M800 362 V382" stroke="#111" stroke-width="1.4"/>
<circle cx="763" cy="380" r="0.9" fill="#111"/><circle cx="786" cy="380" r="0.9" fill="#111"/><circle cx="809" cy="380" r="1" fill="#999"/>
<circle cx="731.5" cy="394" r="0.9" fill="#111"/>
<rect x="745" y="391.5" width="20" height="5" fill="#111"/>
<ellipse cx="777" cy="394" rx="7.5" ry="3.2" fill="url(#fz)"/>
<ellipse cx="777" cy="394" rx="5" ry="2" fill="#111"/>
<path d="M790 394.5 H810" stroke="#111" stroke-width="0.9"/>
<circle cx="763" cy="403" r="0.9" fill="#111"/><circle cx="786" cy="403" r="0.9" fill="#111"/>
<circle cx="732" cy="419" r="8" fill="url(#fz)"/>
<circle cx="754.5" cy="419" r="8" fill="url(#fz)"/>
<circle cx="777" cy="419" r="8.5" fill="url(#fz)"/>
<circle cx="800" cy="420" r="10.5" fill="#111"/>
</g>
<!-- brush bottom buttons -->
<path d="M733.5 458 L725 466.5" stroke="#1a2a6a" stroke-width="1.8"/>
<path d="M725.5 466 L724.5 467.5 L726 466.8Z" fill="#d0a040"/>
<path d="M745.5 457.5 H751 L754.5 461 V467.5 H745.5 Z" fill="#fff" stroke="#444" stroke-width="0.8"/>
<path d="M747 456.5 V460 M745.5 458 H749" stroke="#222" stroke-width="0.8"/>
<rect x="765.5" y="456.5" width="7" height="7" fill="#4a7ad0" stroke="#1a2f6a" stroke-width="0.8"/>
<rect x="769.5" y="460.5" width="7" height="7" fill="#2a5ab0" stroke="#1a2f6a" stroke-width="0.8"/>
<path d="M788 459 L794 465 M794 459 L788 465" stroke="#c01818" stroke-width="2"/>
<path d="M815.5 459 A4 4 0 1 1 810 458" fill="none" stroke="#30a030" stroke-width="1.8"/>
<path d="M814 455.5 L817.5 459.5 L812.5 460 Z" fill="#30a030"/>
<rect x="829" y="460" width="10" height="6" fill="#ccc" stroke="#999" stroke-width="0.7"/>
<circle cx="834" cy="459" r="3.5" fill="#ddd" stroke="#aaa" stroke-width="0.7"/>
</svg></body></html>
